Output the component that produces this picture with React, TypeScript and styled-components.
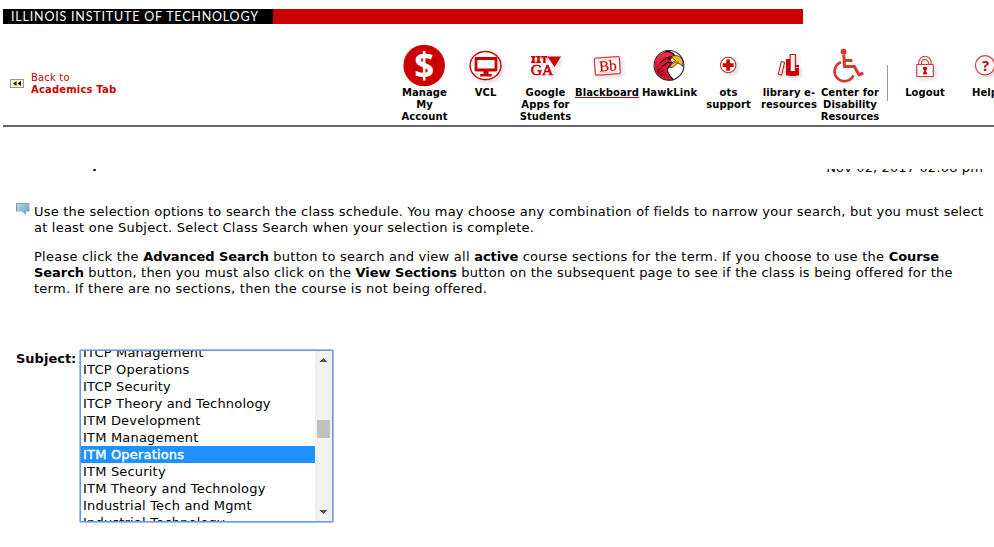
import React from "react";
import styled, { createGlobalStyle } from "styled-components";

const RED = "#cc0000";

const GlobalStyle = createGlobalStyle`
  * { box-sizing: border-box; }
  html, body { margin: 0; background: #fff; overflow: hidden; }
  body { font-family: "DejaVu Sans", sans-serif; color: #000; }
`;

const Page = styled.div`
  width: 994px;
  height: 547px;
  overflow: hidden;
  display: flex;
  flex-direction: column;
`;

const Banner = styled.div`
  display: flex;
  width: 800px;
  height: 15px;
  margin: 9px 0 0 3px;
  background: ${RED};
`;

const BannerTitle = styled.div`
  width: 270px;
  padding-left: 8px;
  background: #000;
  color: #fff;
  font: 400 12.5px/15px Lato, sans-serif;
  letter-spacing: 0.8px;
  white-space: nowrap;
`;

const Header = styled.header`
  display: flex;
  width: 991px;
  height: 103px;
  margin-left: 3px;
  border-bottom: 2px solid #666;
  overflow: hidden;
`;

const BackLink = styled.a`
  display: flex;
  align-items: center;
  gap: 7px;
  width: 391px;
  height: 24px;
  margin-top: 48px;
  padding-left: 7px;
  flex: none;
  color: ${RED};
  font-size: 10px;
  line-height: 12px;
  letter-spacing: 0.17px;
`;

const BackIcon = styled.svg`
  width: 14px;
  height: 9px;
  margin-bottom: 1px;
`;

const BackText = styled.span`
  display: flex;
  flex-direction: column;
`;

const Nav = styled.nav`
  display: flex;
  flex: none;
  padding-top: 16px;
`;

const NavItem = styled.a<{ $width: number }>`
  display: flex;
  flex-direction: column;
  align-items: center;
  flex: none;
  width: ${(p) => p.$width}px;
`;

const NavIcon = styled.svg<{ $flat?: boolean }>`
  flex: none;
  width: 60px;
  height: 46px;
  overflow: visible;
  filter: ${(p) => (p.$flat ? "none" : "drop-shadow(2px 2px 2px rgba(0, 0, 0, 0.16))")};
`;

const NavLabel = styled.span<{ $underlined?: boolean }>`
  margin-top: 1px;
  font-size: 10px;
  font-weight: 700;
  line-height: 12px;
  letter-spacing: 0.08px;
  text-align: center;
  white-space: pre;
  border-bottom: ${(p) => (p.$underlined ? `1px solid ${RED}` : "none")};
  height: ${(p) => (p.$underlined ? "11px" : "auto")};
`;

const Divider = styled.div`
  width: 1px;
  height: 36px;
  margin: 25px 7px 0 8px;
  background: #999;
  flex: none;
`;

const InfoBar = styled.div`
  display: flex;
  justify-content: space-between;
  height: 16px;
  margin: 42px 11px 0 92px;
  overflow: hidden;
  font-size: 13px;
  line-height: 15px;
`;

const Mark = styled.span`
  margin-top: -10px;
  font-weight: 700;
`;

const DateText = styled.span`
  margin-top: -9px;
  height: 15px;
  letter-spacing: 0.13px;
`;

const Info = styled.section`
  display: flex;
  gap: 4px;
  margin: 19px 0 0 16px;
`;

const InfoIcon = styled.svg`
  width: 14px;
  height: 12px;
  margin-top: -1px;
  flex: none;
`;

const InfoText = styled.div`
  display: flex;
  flex-direction: column;
  gap: 13px;
`;

const Paragraph = styled.p`
  margin: 0;
  font-size: 13px;
  line-height: 16px;
`;

const Line = styled.span<{ $spacing: number }>`
  display: block;
  white-space: nowrap;
  letter-spacing: ${(p) => p.$spacing}px;
`;

const Strong = styled.strong`
  letter-spacing: -0.05px;
`;

const Field = styled.div`
  display: flex;
  margin: 52px 0 0 16px;
`;

const FieldLabel = styled.label`
  width: 63px;
  padding-top: 2px;
  font-size: 13px;
  font-weight: 700;
  line-height: 16px;
`;

const ListBox = styled.div`
  display: flex;
  width: 255px;
  height: 174px;
  border: 1px solid #a4c0ef;
  border-radius: 2px;
  padding: 1px;
  background: #6f97dc;
`;

const Options = styled.div`
  display: flex;
  flex-direction: column;
  flex: 1;
  background: #fff;
  overflow: hidden;
`;

const Option = styled.div<{ $selected?: boolean; $first?: boolean }>`
  flex: none;
  height: 17px;
  margin-top: ${(p) => (p.$first ? "-7px" : "0")};
  padding-left: 2px;
  font-size: 13px;
  line-height: 17px;
  letter-spacing: 0.19px;
  white-space: nowrap;
  color: ${(p) => (p.$selected ? "#fff" : "#000")};
  -webkit-text-stroke: ${(p) => (p.$selected ? "0.4px #fff" : "0")};
  background: ${(p) => (p.$selected ? "#1e90ff" : "transparent")};
`;

const ScrollTrack = styled.div`
  display: flex;
  flex-direction: column;
  align-items: center;
  width: 17px;
  background: #f1f1f1;
`;

const Arrow = styled.svg`
  width: 17px;
  height: 17px;
  flex: none;
`;

const Thumb = styled.div`
  width: 13px;
  height: 18px;
  margin: 52px 0 auto;
  background: #c1c1c1;
`;

const SvgText = styled.text<{ $size: number; $weight?: number; $face?: string }>`
  font-family: ${(p) => p.$face ?? "Open Sans"}, sans-serif;
  font-size: ${(p) => p.$size}px;
  font-weight: ${(p) => p.$weight ?? 400};
  text-anchor: middle;
`;

const icons: Record<string, React.ReactNode> = {
  dollar: (
    <>
      <circle cx="29.2" cy="25.5" r="20.8" fill={RED} />
      <SvgText x="29.2" y="38" $size={35} $weight={700} fill="#fff">$</SvgText>
    </>
  ),
  monitor: (
    <>
      <ellipse cx="29.5" cy="25.5" rx="15.4" ry="14" fill="#fff" stroke={RED} strokeWidth="1.4" />
      <path d="M20 18.5h20v11.5H20z" fill="none" stroke={RED} strokeWidth="2.8" strokeLinejoin="round" />
      <path d="M27.5 31h5v3h3.3v2.6H24.2V34h3.3z" fill={RED} />
    </>
  ),
  google: (
    <g fill={RED}>
      <path d="M15 16h4.6v1.5h-1.1v4h1.1V23H15v-1.500h1.100v-4H15zM20.200 16h4.600v1.500h-1.100v4h1.100V23h-4.600v-1.500h1.100v-4h-1.100zM25.300 16h6.200v2.600h-1v-1H29.600V23h-2.400v-5.400h-.9v1h-1z" />
      <SvgText x="26" y="34.5" $size={15.5} $face="Liberation Serif" stroke={RED} strokeWidth=".6">GA</SvgText>
      <path d="M31.500 16.500h13.600L38.500 27z" />
    </g>
  ),
  blackboard: (
    <g transform="rotate(-4 30 26)">
      <rect x="17.8" y="17.3" width="25" height="17.2" rx="1.5" fill="#fff" stroke="#d43a3a" strokeWidth="1.3" />
      <path d="M20 19.5h20.5M20 32.4h20.5" stroke="#edb0b0" strokeWidth=".7" />
      <SvgText x="30.8" y="31" $size={15} $face="Liberation Serif" fill={RED} stroke={RED} strokeWidth=".2">Bb</SvgText>
    </g>
  ),
  hawk: (
    <>
      <rect x="6" y="4" width="46" height="42" fill="#fffefb" />
      <circle cx="29" cy="25.4" r="14.8" fill="#fff" />
      <path d="M14.5 26c0-7 5-13 12-15 4 .3 7 2 9 5l-5 3.5 2 3-4 4.5c-1.5 3-.5 6 2 9l3 4.2c-9 1.3-18-4-19-14z" fill="#d81533" />
      <path d="M16 19.5c4-5.5 9-7.5 15-6l4 3-6-.8-8 2.8-3 6z" fill="#ef2944" />
      <path d="M17 29l7-2-4 3.200 5-.5-3 3 5 .3-2.500 2.500 4 1-8-.5-4-4z" fill="#a80d26" />
      <path d="M20 23l7-5.500 4.500-.5M22 26.500l6.500-4.500 3.500 1.500-3.800 4c-1.500 3-.3 6 2.200 9l3.300 3.300M25 11.500c4-.5 8 1.500 10 4.500" fill="none" stroke="#111" strokeWidth="1.100" />
      <path d="M31 16.800c4-2.200 8-1.200 10.300 1.500 1.700 2.300 2 5 1 8.200-1.500-2.600-3.200-3.300-5.300-3l-3.600 3.500-3.900.8 2.500-5 3.500-2.300z" fill="#f7b51c" stroke="#111" strokeWidth=".7" />
      <path d="M31.500 23.800l4.500-1.800 3 .3" fill="none" stroke="#8a4b00" strokeWidth=".8" />
      <path d="M26.500 18.600l4.500-.8-1 2.200z" fill="#111" />
      <circle cx="29" cy="25.4" r="14.9" fill="none" stroke="#222" strokeWidth="1.1" />
    </>
  ),
  support: (
    <>
      <circle cx="29.2" cy="25" r="7.7" fill="#fff" stroke="#d22b2b" strokeWidth="1.1" />
      <path d="M27.3 19.5H31v3.7h3.7V27H31v3.7h-3.7V27h-3.7v-3.8h3.7z" fill={RED} />
    </>
  ),
  library: (
    <>
      <path d="M22.4 21.5l3.2.9-3 12.8-3.4-.9z" fill="#fff" stroke={RED} strokeWidth="1" />
      <path d="M27 19h4.2v16.5H27z" fill={RED} />
      <path d="M31.2 14.5h5.1v21h-5.1z" fill="#fff" stroke={RED} strokeWidth="1.1" />
      <path d="M36.5 25H40v10.5h-3.5zM31 31h5.5v4.5H31z" fill={RED} />
      <path d="M37 27.5h2.6" stroke="#fff" strokeWidth=".8" />
    </>
  ),
  wheelchair: (
    <>
      <circle cx="23.6" cy="11.8" r="3" fill="#d5382f" />
      <path d="M23.8 15l.7 11.5h9.8l4.7 8.3 4.3-1.8M24 20.5h8.3" fill="none" stroke="#d5382f" strokeWidth="3" />
      <path d="M21 22.2a9.8 9.8 0 1 0 12.4 13" fill="none" stroke="#d5382f" strokeWidth="2.7" />
    </>
  ),
  lock: (
    <>
      <path d="M23.8 25v-2.500a6.200 6.200 0 0 1 12.400 0V25M26.500 25v-2a3.500 3.500 0 0 1 7 0v2" fill="none" stroke="#d83a3a" strokeWidth="1.1" />
      <rect x="21.7" y="24.5" width="16.6" height="12" rx=".6" fill="#fff" stroke="#d83a3a" strokeWidth="1.2" />
      <path d="M28 27h4v2.500h-.8v3h.9v1.700H28v-1.700h.9v-3H28z" fill={RED} />
    </>
  ),
  help: (
    <>
      <circle cx="30" cy="25.3" r="9.6" fill="#fff" stroke="#d83a3a" strokeWidth="1.2" />
      <SvgText x="30.6" y="30.8" $size={15} $weight={700} fill={RED}>?</SvgText>
    </>
  ),
};

type Entry = { icon: string; label: string; width: number; underlined?: boolean };

const services: Entry[] = [
  { icon: "dollar", label: "Manage\nMy\nAccount", width: 61 },
  { icon: "monitor", label: "VCL", width: 61 },
  { icon: "google", label: "Google\nApps for\nStudents", width: 59 },
  { icon: "blackboard", label: "Blackboard", width: 64, underlined: true },
  { icon: "hawk", label: "HawkLink", width: 61 },
  { icon: "support", label: "ots\nsupport", width: 57 },
  { icon: "library", label: "library e-\nresources", width: 64 },
  { icon: "wheelchair", label: "Center for\nDisability\nResources", width: 58 },
];

const account: Entry[] = [
  { icon: "lock", label: "Logout", width: 60 },
  { icon: "help", label: "Help", width: 60 },
];

const subjects = [
  "ITCP Management",
  "ITCP Operations",
  "ITCP Security",
  "ITCP Theory and Technology",
  "ITM Development",
  "ITM Management",
  "ITM Operations",
  "ITM Security",
  "ITM Theory and Technology",
  "Industrial Tech and Mgmt",
  "Industrial Technology",
];

const flatIcons = ["hawk", "dollar", "wheelchair"];

function NavEntry({ icon, label, width, underlined }: Entry) {
  return (
    <NavItem $width={width}>
      <NavIcon viewBox="0 0 60 46" $flat={flatIcons.includes(icon)}>{icons[icon]}</NavIcon>
      <NavLabel $underlined={underlined}>{label}</NavLabel>
    </NavItem>
  );
}

export default function App() {
  return (
    <Page>
      <GlobalStyle />
      <Banner>
        <BannerTitle>ILLINOIS INSTITUTE OF TECHNOLOGY</BannerTitle>
      </Banner>
      <Header>
        <BackLink>
          <BackIcon viewBox="0 0 14 9">
            <rect x=".5" y=".5" width="13" height="8" fill="#ffffcc" stroke="#999" />
            <path d="M6.5 2v5L3 4.5zM11 2v5L7.5 4.5z" fill="#000" />
          </BackIcon>
          <BackText>
            <span>Back to</span>
            <b>Academics Tab</b>
          </BackText>
        </BackLink>
        <Nav>
          {services.map((s) => <NavEntry key={s.icon} {...s} />)}
          <Divider />
          {account.map((s) => <NavEntry key={s.icon} {...s} />)}
        </Nav>
      </Header>
      <InfoBar>
        <Mark>.</Mark>
        <DateText>Nov 02, 2017 02:08 pm</DateText>
      </InfoBar>
      <Info>
        <InfoIcon viewBox="0 0 14 12">
          <defs>
            <linearGradient id="bubble" x1="0" y1="0" x2="1" y2="1">
              <stop offset="0" stopColor="#c4dcea" />
              <stop offset="1" stopColor="#5795bd" />
            </linearGradient>
          </defs>
          <path d="M.5.5h13v8H10V12L6 8.5H.5z" fill="url(#bubble)" />
          <path d="M.5 8.5V.5h13" fill="none" stroke="#6f9fbd" />
        </InfoIcon>
        <InfoText>
          <Paragraph>
            <Line $spacing={0.215}>Use the selection options to search the class schedule. You may choose any combination of fields to narrow your search, but you must select</Line>
            <Line $spacing={0.22}>at least one Subject. Select Class Search when your selection is complete.</Line>
          </Paragraph>
          <Paragraph>
            <Line $spacing={0.245}>Please click the <Strong>Advanced Search</Strong> button to search and view all <Strong>active</Strong> course sections for the term. If you choose to use the <Strong>Course</Strong></Line>
            <Line $spacing={0.2}><Strong>Search</Strong> button, then you must also click on the <Strong>View Sections</Strong> button on the subsequent page to see if the class is being offered for the</Line>
            <Line $spacing={0.26}>term. If there are no sections, then the course is not being offered.</Line>
          </Paragraph>
        </InfoText>
      </Info>
      <Field>
        <FieldLabel>Subject:</FieldLabel>
        <ListBox>
          <Options>
            {subjects.map((s, i) => (
              <Option key={s} $first={i === 0} $selected={s === "ITM Operations"}>{s}</Option>
            ))}
          </Options>
          <ScrollTrack>
            <Arrow viewBox="0 0 17 17"><path d="M4.5 11h8l-4-4z" fill="#505050" /></Arrow>
            <Thumb />
            <Arrow viewBox="0 0 17 17"><path d="M4.5 6h8l-4 4z" fill="#505050" /></Arrow>
          </ScrollTrack>
        </ListBox>
      </Field>
    </Page>
  );
}
